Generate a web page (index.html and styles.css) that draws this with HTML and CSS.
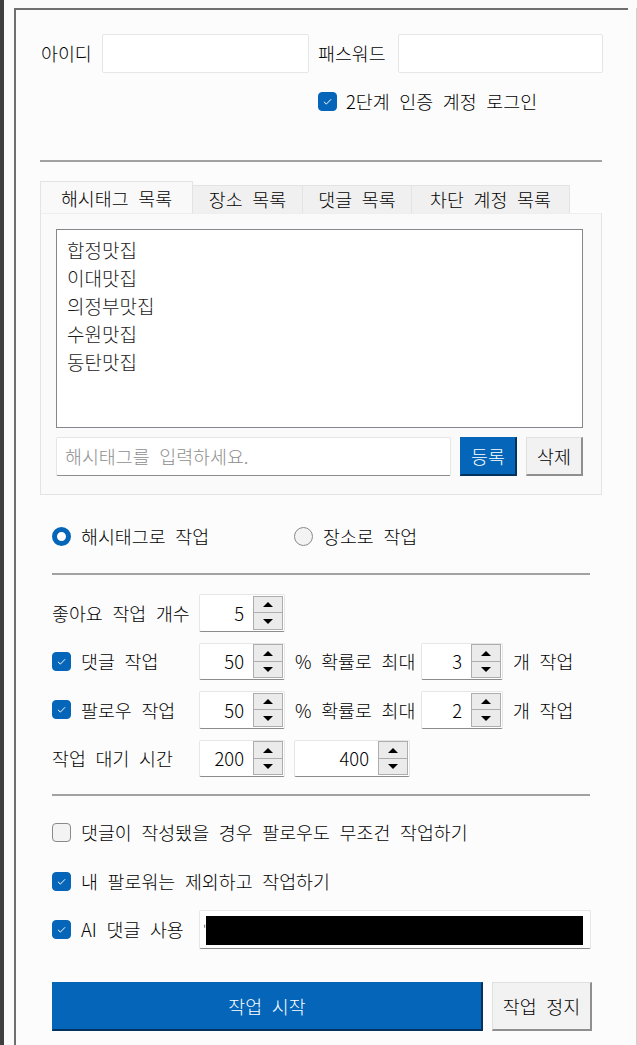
FILE: index.html
```html
<!DOCTYPE html>
<html lang="ko">
<head>
<meta charset="utf-8">
<title>작업 설정</title>
<link rel="stylesheet" href="styles.css">
</head>
<body>
<div class="app">
  <div class="strip"></div>
  <div class="window">
    <div class="login-row">
      <span class="lbl lbl-id">아이디</span>
      <div class="input w-id"></div>
      <span class="lbl lbl-pw">패스워드</span>
      <div class="input w-pw"></div>
    </div>
    <div class="check-row twofa">
      <span class="cb on"><svg viewBox="0 0 19 19"><path d="M5.5 9.8 L8.2 12.4 L13.5 7" /></svg></span>
      <span class="txt">2단계 인증 계정 로그인</span>
    </div>
    <div class="sep sep-top"></div>
    <div class="tabs">
      <div class="tab active t1">해시태그 목록</div>
      <div class="tab t2">장소 목록</div>
      <div class="tab t3">댓글 목록</div>
      <div class="tab t4">차단 계정 목록</div>
    </div>
    <div class="panel">
      <div class="listbox">
        <div class="item">합정맛집</div>
        <div class="item">이대맛집</div>
        <div class="item">의정부맛집</div>
        <div class="item">수원맛집</div>
        <div class="item">동탄맛집</div>
      </div>
      <div class="entry-row">
        <div class="input entry"><span class="ph">해시태그를 입력하세요.</span></div>
        <div class="btn primary small">등록</div>
        <div class="btn small">삭제</div>
      </div>
    </div>
    <div class="radio-row">
      <div class="radio-item r1"><span class="radio on"></span><span class="txt">해시태그로 작업</span></div>
      <div class="radio-item"><span class="radio"></span><span class="txt">장소로 작업</span></div>
    </div>
    <div class="sep sep-mid"></div>
    <div class="opts">
      <div class="opt-row">
        <div class="opt-lbl"><span class="txt">좋아요 작업 개수</span></div>
        <div class="spin sp-a"><span class="val">5</span><span class="arrows"><span class="ar up"></span><span class="ar down"></span></span></div>
      </div>
      <div class="opt-row">
        <div class="opt-lbl"><span class="cb on"><svg viewBox="0 0 19 19"><path d="M5.5 9.8 L8.2 12.4 L13.5 7" /></svg></span><span class="txt">댓글 작업</span></div>
        <div class="spin sp-a"><span class="val">50</span><span class="arrows"><span class="ar up"></span><span class="ar down"></span></span></div>
        <span class="mid-txt">% 확률로 최대</span>
        <div class="spin sp-b"><span class="val">3</span><span class="arrows"><span class="ar up"></span><span class="ar down"></span></span></div>
        <span class="end-txt">개 작업</span>
      </div>
      <div class="opt-row">
        <div class="opt-lbl"><span class="cb on"><svg viewBox="0 0 19 19"><path d="M5.5 9.8 L8.2 12.4 L13.5 7" /></svg></span><span class="txt">팔로우 작업</span></div>
        <div class="spin sp-a"><span class="val">50</span><span class="arrows"><span class="ar up"></span><span class="ar down"></span></span></div>
        <span class="mid-txt">% 확률로 최대</span>
        <div class="spin sp-b"><span class="val">2</span><span class="arrows"><span class="ar up"></span><span class="ar down"></span></span></div>
        <span class="end-txt">개 작업</span>
      </div>
      <div class="opt-row">
        <div class="opt-lbl"><span class="txt">작업 대기 시간</span></div>
        <div class="spin sp-a"><span class="val">200</span><span class="arrows"><span class="ar up"></span><span class="ar down"></span></span></div>
        <div class="spin sp-c"><span class="val">400</span><span class="arrows"><span class="ar up"></span><span class="ar down"></span></span></div>
      </div>
    </div>
    <div class="sep sep-bot"></div>
    <div class="checks">
      <div class="check-row big">
        <span class="cb"></span>
        <span class="txt">댓글이 작성됐을 경우 팔로우도 무조건 작업하기</span>
      </div>
      <div class="check-row big">
        <span class="cb on"><svg viewBox="0 0 19 19"><path d="M5.5 9.8 L8.2 12.4 L13.5 7" /></svg></span>
        <span class="txt">내 팔로워는 제외하고 작업하기</span>
      </div>
      <div class="check-row big ai">
        <span class="cb on"><svg viewBox="0 0 19 19"><path d="M5.5 9.8 L8.2 12.4 L13.5 7" /></svg></span>
        <span class="txt ai-lbl">AI 댓글 사용</span>
        <div class="input ai-input"><span class="tick">'</span><span class="redact"></span></div>
      </div>
    </div>
    <div class="actions">
      <div class="btn primary start">작업 시작</div>
      <div class="btn stop">작업 정지</div>
    </div>
  </div>
  <div class="rightline"></div>
</div>
</body>
</html>
```

FILE: styles.css
```css
* { box-sizing: border-box; }
html, body {
  margin: 0;
  padding: 0;
  background: #fbfbfb;
}
body {
  font-family: "Noto Sans CJK KR", "Noto Sans", sans-serif;
  font-size: 18.4px;
  font-weight: 300;
  line-height: 1;
  color: #000;
  word-spacing: 4.5px;
  overflow: hidden;
}
.app {
  display: flex;
  height: 1045px;
  width: 637px;
}
.strip {
  width: 4px;
  flex: none;
  background: #3f3f3f;
}
.window {
  flex: none;
  margin-left: 10px;
  margin-top: 8px;
  width: 614px;
  border-top: 2px solid #6f6f6f;
  border-left: 2px solid #6f6f6f;
  background: #fcfcfc;
}
.rightline {
  margin-left: 8px;
  margin-top: 8px;
  width: 1px;
  background: #d0d0d0;
}
.txt { white-space: nowrap; }

/* inputs */
.input {
  height: 39px;
  background: #fff;
  border: 1px solid #e6e6e6;
  border-bottom-color: #8c8c8c;
  border-radius: 2px;
}
.login-row {
  display: flex;
  align-items: center;
  margin-top: 24px;
  padding-left: 25px;
}
.lbl { white-space: nowrap; }
.lbl-id { width: 61px; }
.lbl-pw { width: 80px; margin-left: 9px; }
.w-id { width: 207px; border-bottom-color: #e6e6e6; }
.w-pw { width: 205px; border-bottom-color: #e6e6e6; }

/* checkbox */
.check-row {
  display: flex;
  align-items: center;
}
.cb {
  width: 19px;
  height: 19px;
  flex: none;
  border-radius: 4px;
  background: #f3f3f3;
  border: 1px solid #8a8a8a;
  display: inline-block;
}
.cb.on {
  background: #0465b9;
  border-color: #0465b9;
}
.cb svg {
  display: block;
  width: 17px;
  height: 17px;
  fill: none;
  stroke: #fff;
  stroke-width: 1.1;
}
.check-row .txt { margin-left: 10px; }
.twofa {
  margin-top: 19px;
  padding-left: 302px;
  height: 19px;
}
.twofa .txt { margin-left: 9px; }

/* separators */
.sep {
  height: 2px;
  background: #a2a2a2;
}
.sep-top {
  margin-top: 49px;
  margin-left: 24px;
  width: 562px;
}
.sep-mid {
  margin-top: 27px;
  margin-left: 36px;
  width: 538px;
}
.sep-bot {
  margin-top: 17px;
  margin-left: 36px;
  width: 538px;
}

/* tabs */
.tabs {
  display: flex;
  align-items: flex-end;
  margin-top: 19px;
  margin-left: 24px;
  height: 32px;
}
.tab {
  height: 28px;
  display: flex;
  align-items: center;
  justify-content: center;
  background: #f0f0f0;
  border: 1px solid #e3e3e3;
  border-bottom: none;
  border-left: none;
  white-space: nowrap;
}
.tab.active {
  height: 32px;
  background: #f9f9f9;
  border-left: 1px solid #e3e3e3;
  padding-top: 2px;
}
.t1 { width: 153px; }
.t2 { width: 110px; }
.t3 { width: 109px; }
.t4 { width: 158px; }

.panel {
  margin-left: 24px;
  width: 562px;
  height: 282px;
  border: 1px solid #e3e3e3;
  border-top-color: #eeeeee;
  background: #fafafa;
  padding: 15px 18px 0 15px;
}
.listbox {
  width: 527px;
  height: 199px;
  background: #fff;
  border: 1px solid #85878d;
  padding: 5px 0 0 10px;
}
.item {
  height: 28px;
  display: flex;
  align-items: center;
  color: #1a1a1a;
  font-size: 19px;
  font-weight: 300;
}
.entry-row {
  display: flex;
  margin-top: 9px;
  gap: 9px;
}
.entry {
  width: 395px;
  display: flex;
  align-items: center;
  padding-left: 8px;
}
.ph { color: #8e8e8e; white-space: nowrap; }

/* buttons */
.btn {
  display: flex;
  align-items: center;
  justify-content: center;
  background: #f2f2f2;
  border: 1px solid #e0e0e0;
  border-right: 2px solid #8f8f8f;
  border-bottom: 2px solid #8f8f8f;
  white-space: nowrap;
}
.btn.primary {
  background: #0465b9;
  color: #fff;
  border-color: #0465b9;
  border-right-color: #03325e;
  border-bottom-color: #03325e;
}
.btn.small {
  width: 57px;
  height: 39px;
}

/* radios */
.radio-row {
  display: flex;
  align-items: center;
  margin-top: 32px;
  padding-left: 36px;
  height: 19px;
}
.radio-item {
  display: flex;
  align-items: center;
}
.radio-item .txt { margin-left: 10px; }
.r1 { width: 242px; }
.radio {
  width: 19px;
  height: 19px;
  border-radius: 50%;
  border: 1px solid #8a8a8a;
  background: #f3f3f3;
  display: inline-block;
  flex: none;
}
.radio.on {
  border: 5.5px solid #0465b9;
  background: #fff;
}

/* options */
.opts {
  margin-top: 19px;
  padding-left: 36px;
  display: flex;
  flex-direction: column;
  gap: 11px;
}
.opt-row {
  display: flex;
  align-items: center;
  height: 37.5px;
}
.opt-lbl {
  width: 147px;
  display: flex;
  align-items: center;
}
.opt-lbl .cb + .txt { margin-left: 10px; }
.spin {
  height: 37.5px;
  background: #fff;
  border: 1px solid #e6e6e6;
  border-bottom-color: #8c8c8c;
  border-radius: 2px;
  display: flex;
  align-items: center;
  justify-content: flex-end;
  padding-right: 1px;
}
.spin .val { margin-right: 9px; }
.sp-a { width: 86px; }
.sp-b { width: 82px; }
.sp-c { width: 116px; margin-left: 9px; }
.arrows {
  display: flex;
  flex-direction: column;
  width: 30px;
  height: 34px;
}
.ar {
  flex: 1;
  border: 1px solid #adadad;
  background: #ebebeb;
  display: flex;
  align-items: center;
  justify-content: center;
}
.ar.up { border-bottom: none; }
.ar::after {
  content: "";
  width: 0;
  height: 0;
  border-left: 5px solid transparent;
  border-right: 5px solid transparent;
}
.ar.up::after { border-bottom: 5px solid #000; }
.ar.down::after { border-top: 5px solid #000; }
.mid-txt {
  margin-left: 10px;
  width: 126px;
  white-space: nowrap;
}
.end-txt {
  margin-left: 10px;
  white-space: nowrap;
}

/* bottom checks */
.checks {
  margin-top: 17px;
  padding-left: 36px;
  display: flex;
  flex-direction: column;
  gap: 9.5px;
}
.check-row.big { height: 39px; }
.ai-lbl { width: 118px; }
.ai-input {
  width: 392px;
  display: flex;
  align-items: stretch;
  padding: 5px 7px 3px 3px;
}
.tick {
  width: 3px;
  color: #444;
  font-size: 13px;
  line-height: 1;
  padding-top: 8px;
}
.redact {
  flex: 1;
  background: #000;
}

/* actions */
.actions {
  display: flex;
  gap: 9px;
  margin-top: 33px;
  padding-left: 36px;
}
.start {
  width: 431px;
  height: 49px;
}
.stop {
  width: 100px;
  height: 49px;
}
```
